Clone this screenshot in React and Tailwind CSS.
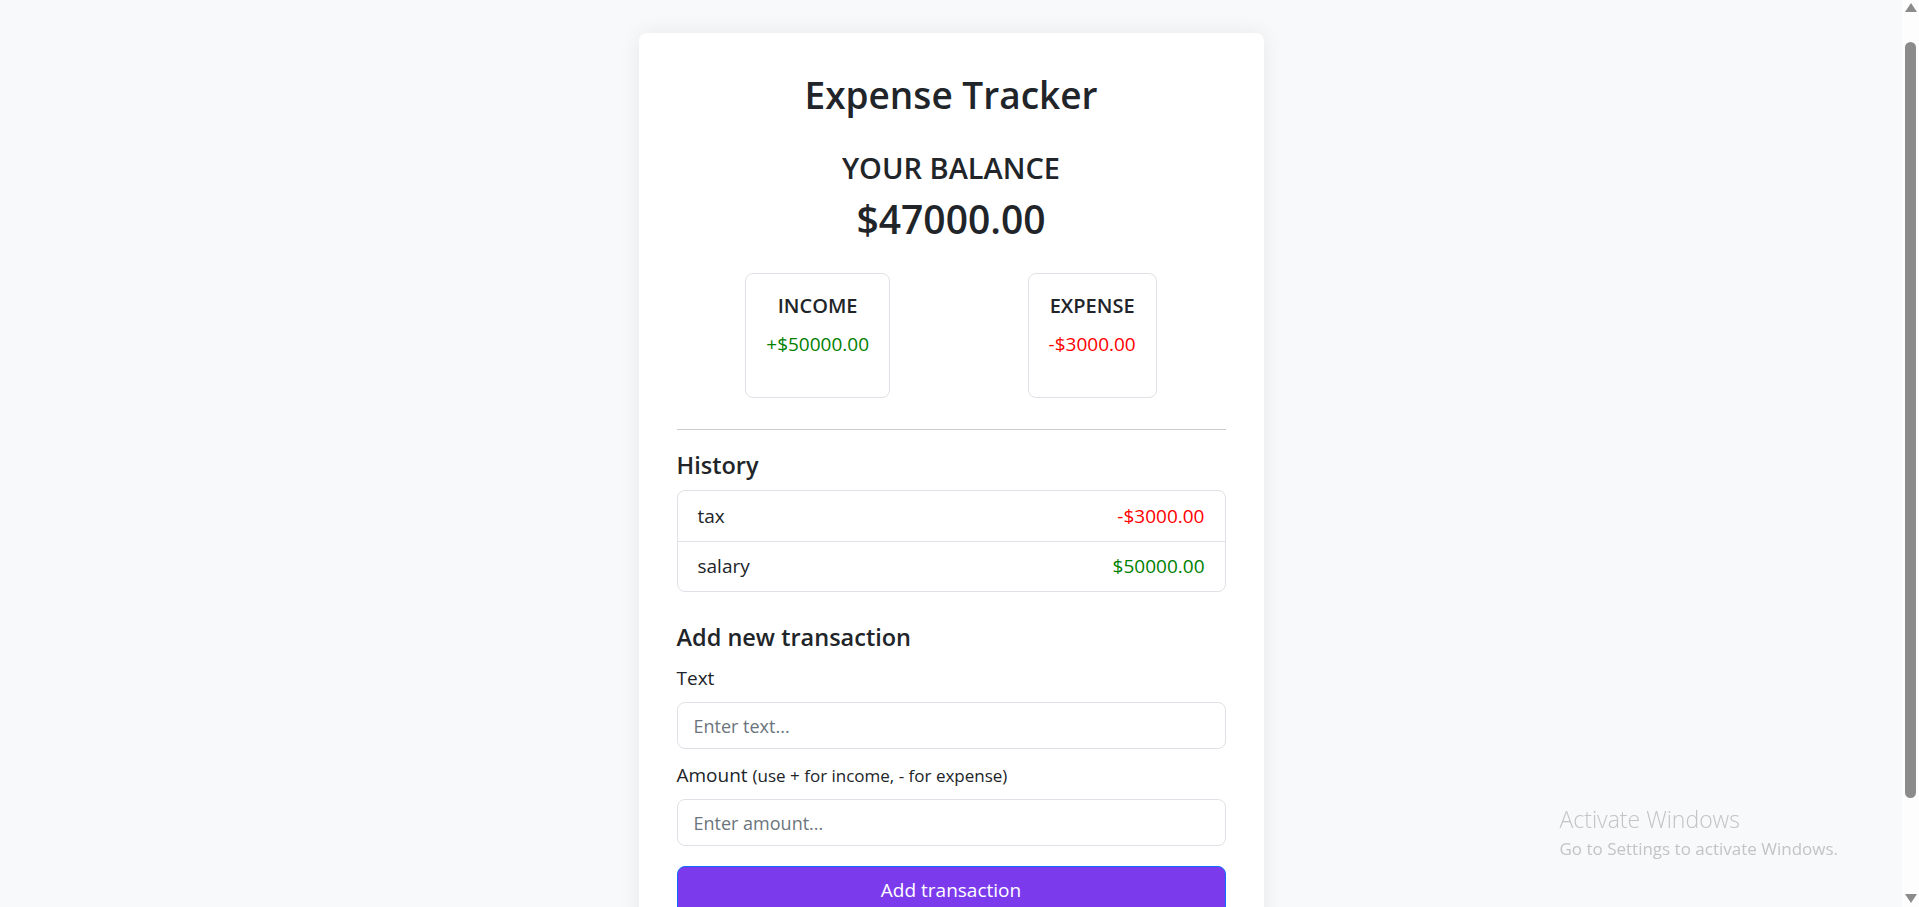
import { useState } from "react";

const initialTransactions = [
  { id: 1, text: "tax", amount: -3000 },
  { id: 2, text: "salary", amount: 50000 },
];

const SummaryBox = ({ label, value, color }) => (
  <div className="h-[125px] rounded-lg border border-[#dee2e6] px-5 pt-5 text-center">
    <h5 className="text-[20px] leading-[24px] font-semibold">{label}</h5>
    <p className={`mt-[13px] text-[19px] leading-[27px] ${color}`}>{value}</p>
  </div>
);

const ScrollBar = () => (
  <div className="pointer-events-none fixed top-0 right-0 bottom-0 w-[17px] bg-[#fdfdfd]">
    <div className="mx-auto mt-[3px] h-0 w-0 border-x-[6px] border-b-[9px] border-x-transparent border-b-[#8b8b8b]" />
    <div className="mx-auto mt-[30px] h-[756px] w-[11px] rounded-full bg-[#8b8b8b]" />
    <div className="absolute bottom-[4px] left-1/2 h-0 w-0 -translate-x-1/2 border-x-[6px] border-t-[9px] border-x-transparent border-t-[#8b8b8b]" />
  </div>
);

const App = () => {
  const [transactions] = useState(initialTransactions);
  const [text, setText] = useState("");
  const [amount, setAmount] = useState("");

  const income = transactions
    .filter((t) => t.amount > 0)
    .reduce((sum, t) => sum + t.amount, 0);
  const expense = transactions
    .filter((t) => t.amount < 0)
    .reduce((sum, t) => sum + t.amount, 0);
  const balance = income + expense;

  return (
    <div className="min-h-screen bg-[#f8f9fa] pr-[17px] font-['Open_Sans',sans-serif] text-[#212529]">
      <div className="flex justify-center pt-[33px] pb-[33px]">
        <div className="w-[625px] rounded-lg bg-white px-[38px] pt-[38px] pb-[38px] shadow-[0_0_22px_rgba(0,0,0,0.07)]">
          <h1 className="text-center text-[37px] leading-[48px] font-semibold">
            Expense Tracker
          </h1>
          <h3 className="mt-8 text-center text-[29px] leading-[34px] font-semibold">
            YOUR BALANCE
          </h3>
          <h1 className="mt-[10px] text-center text-[39px] leading-[48px] font-semibold">
            ${balance.toFixed(2)}
          </h1>

          <div className="mt-[30px] flex justify-around">
            <SummaryBox
              label="INCOME"
              value={`+$${income.toFixed(2)}`}
              color="text-[#008000]"
            />
            <SummaryBox
              label="EXPENSE"
              value={`-$${Math.abs(expense).toFixed(2)}`}
              color="text-[#ff0000]"
            />
          </div>

          <hr className="mt-[31px] border-t border-[#cccccc]" />

          <h4 className="mt-[20px] text-[23.5px] leading-[30px] font-semibold">History</h4>
          <ul className="mt-[10px] overflow-hidden rounded-lg border border-[#dee2e6]">
            {transactions.map((t, i) => (
              <li
                key={t.id}
                className={`flex h-[50px] items-center justify-between px-5 text-[19px] ${
                  i > 0 ? "border-t border-[#dee2e6]" : ""
                }`}
              >
                <span>{t.text}</span>
                <span className={t.amount < 0 ? "text-[#ff0000]" : "text-[#008000]"}>
                  {t.amount < 0 ? "-" : ""}${Math.abs(t.amount).toFixed(2)}
                </span>
              </li>
            ))}
          </ul>

          <h4 className="mt-[30px] text-[23.5px] leading-[30px] font-semibold">
            Add new transaction
          </h4>
          <form onSubmit={(e) => e.preventDefault()}>
            <label className="mt-[13px] block text-[19px] leading-[27px]">Text</label>
            <input
              type="text"
              value={text}
              onChange={(e) => setText(e.target.value)}
              placeholder="Enter text..."
              className="mt-[10px] block h-[47px] w-full rounded-lg border border-[#dee2e6] px-4 text-[18px] outline-none placeholder:text-[#6c757d]"
            />
            <label className="mt-[13px] block text-[19px] leading-[27px]">
              Amount <span className="text-[17px]">(use + for income, - for expense)</span>
            </label>
            <input
              type="number"
              value={amount}
              onChange={(e) => setAmount(e.target.value)}
              placeholder="Enter amount..."
              className="mt-[10px] block h-[47px] w-full rounded-lg border border-[#dee2e6] px-4 text-[18px] outline-none placeholder:text-[#6c757d]"
            />
            <button
              type="submit"
              className="mt-[20px] block w-full rounded-lg border border-[#0d6efd] bg-[#7c3aed] py-[10px] text-[19px] leading-[27px] text-white"
            >
              Add transaction
            </button>
          </form>
        </div>
      </div>

      <div className="pointer-events-none fixed right-[81px] bottom-[46px] text-[#c3c4c5]">
        <div className="text-[23px] leading-[30px] font-light">Activate Windows</div>
        <div className="mt-[3px] text-[17px] leading-[24px]">Go to Settings to activate Windows.</div>
      </div>

      <ScrollBar />
    </div>
  );
};

export default App;
